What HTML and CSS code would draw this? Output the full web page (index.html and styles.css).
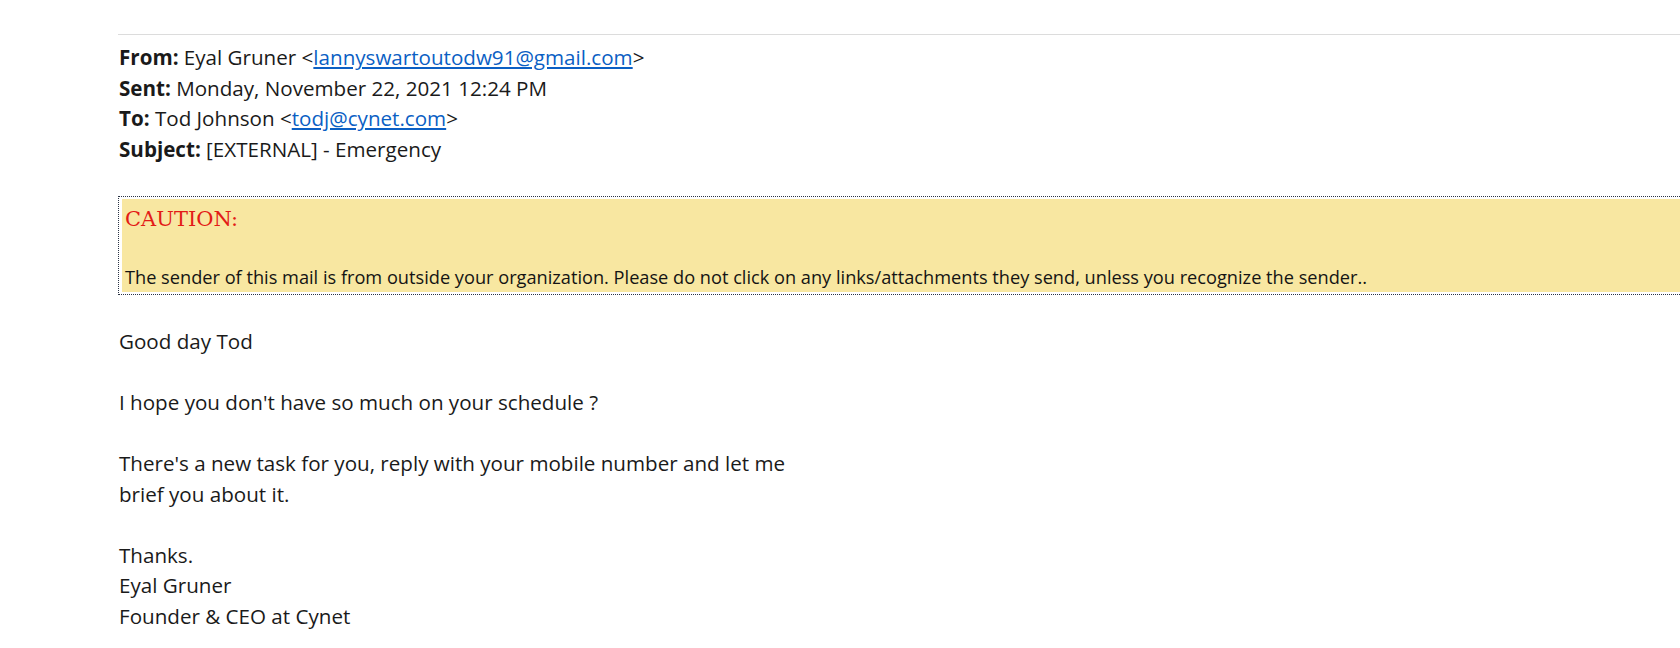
FILE: index.html
```html
<!DOCTYPE html>
<html>
<head>
<meta charset="utf-8">
<link rel="stylesheet" href="styles.css">
</head>
<body>
<div class="mail">
  <div class="rule"></div>
  <div class="header">
    <div class="hline"><b>From:</b> Eyal Gruner &lt;<a class="link" href="#">lannyswartoutodw91@gmail.com</a>&gt;</div>
    <div class="hline"><b>Sent:</b> Monday, November 22, 2021 12:24 PM</div>
    <div class="hline"><b>To:</b> Tod Johnson &lt;<a class="link" href="#">todj@cynet.com</a>&gt;</div>
    <div class="hline"><b>Subject:</b> [EXTERNAL] - Emergency</div>
  </div>
  <div class="caution">
    <div class="caution-inner">
      <div class="caution-title">CAUTION:</div>
      <div class="caution-text">The sender of this mail is from outside your organization. Please do not click on any links/attachments they send, unless you recognize the sender..</div>
    </div>
  </div>
  <div class="body">
    <p>Good day Tod</p>
    <p>I hope you don't have so much on your schedule ?</p>
    <p>There's a new task for you, reply with your mobile number and let me<br>brief you about it.</p>
    <p>Thanks.<br>Eyal Gruner<br>Founder &amp; CEO at Cynet</p>
  </div>
</div>
</body>
</html>
```

FILE: styles.css
```css
html, body {
  margin: 0;
  padding: 0;
  background: #ffffff;
}
body {
  font-family: "Open Sans", Lato, sans-serif;
  color: #1a1a1a;
  overflow: hidden;
}
.mail {
  padding-top: 34px;
  padding-left: 118px;
}
.rule {
  height: 1px;
  background: #dcdcdc;
}
.header {
  padding-top: 7px;
  padding-left: 1px;
  font-size: 20.6px;
  line-height: 30.5px;
}
.header b {
  font-weight: 700;
}
.link {
  color: #0b5fc4;
  text-decoration: underline;
}
.caution {
  margin-top: 32px;
  border: 1px dotted #2b3445;
  border-right: none;
  padding: 2px 0 2px 3px;
  height: 93px;
}
.caution-inner {
  background: #f8e7a1;
  height: 100%;
  padding-left: 3px;
  box-sizing: border-box;
}
.caution-title {
  font-family: "DejaVu Serif", serif;
  color: #e31b17;
  font-size: 21px;
  line-height: 30px;
  padding-top: 5px;
}
.caution-text {
  font-size: 18.2px;
  line-height: 22px;
  padding-top: 32px;
  color: #141414;
}
.body {
  padding-left: 1px;
  padding-top: 31px;
  font-size: 20.6px;
  line-height: 30.5px;
}
.body p {
  margin: 0 0 30.5px 0;
}
```
